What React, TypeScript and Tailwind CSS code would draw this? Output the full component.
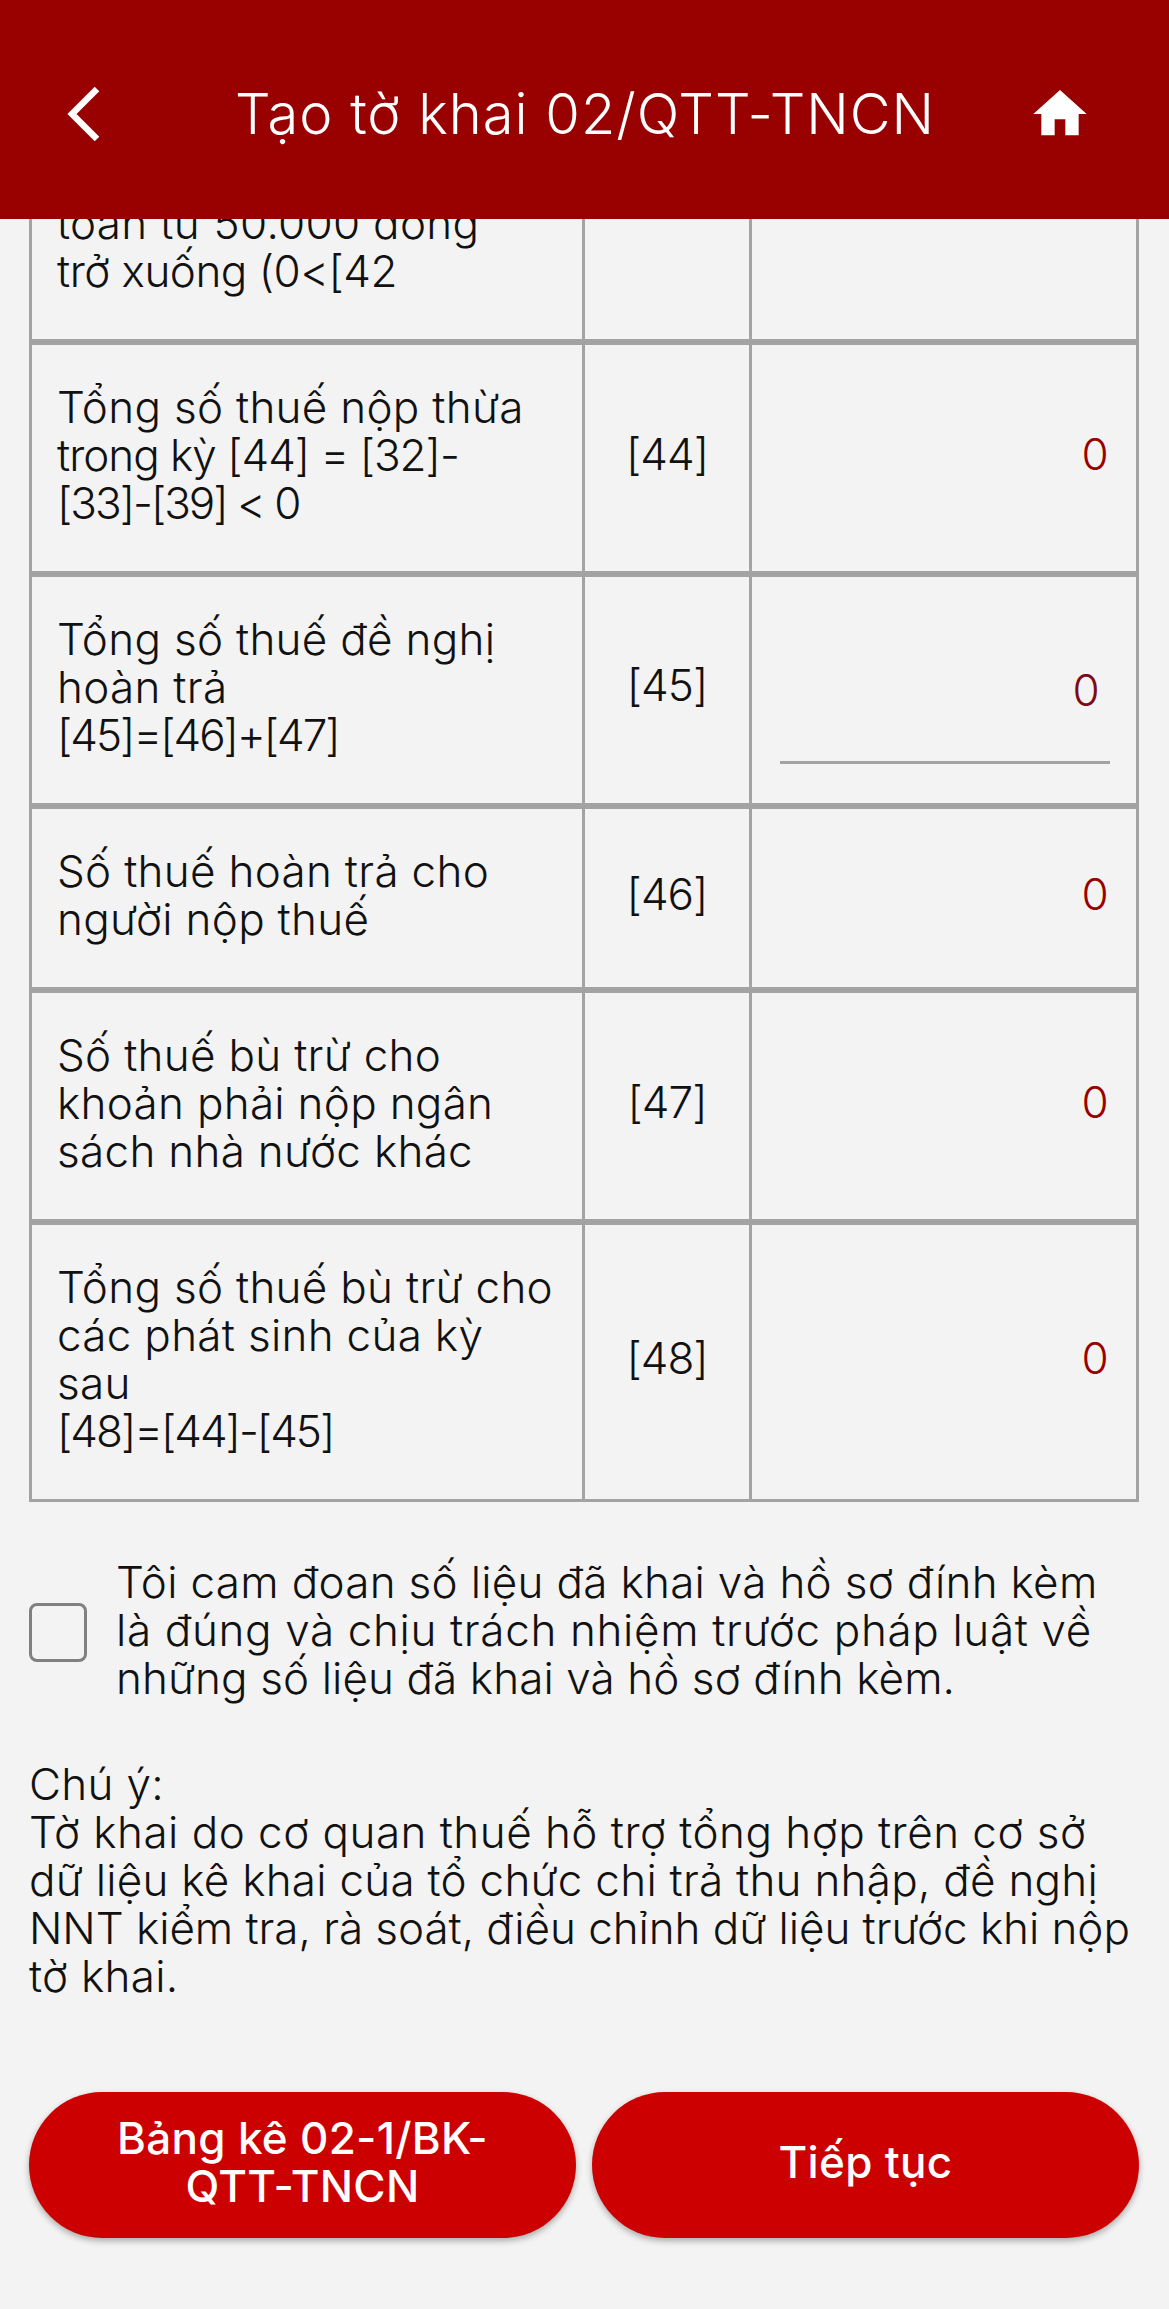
import React from "react";

const rows = [
    { lines: ["Tổng số thuế nộp thừa", "trong kỳ [44] = [32]-", "[33]-[39] < 0"], code: "[44]" },
    { lines: ["Tổng số thuế đề nghị", "hoàn trả", "[45]=[46]+[47]"], code: "[45]", input: true },
    { lines: ["Số thuế hoàn trả cho", "người nộp thuế"], code: "[46]" },
    { lines: ["Số thuế bù trừ cho", "khoản phải nộp ngân", "sách nhà nước khác"], code: "[47]" },
    { lines: ["Tổng số thuế bù trừ cho", "các phát sinh của kỳ", "sau", "[48]=[44]-[45]"], code: "[48]" },
];

// digits and brackets run narrower in the reference font
function lineClass(l: string) {
    if (l.startsWith("[")) return "whitespace-nowrap tracking-[-2px]";
    if (l.includes("[")) return "whitespace-nowrap tracking-[-1px]";
    return "whitespace-nowrap";
}

function Row({ lines, code, input }: { lines: string[]; code: string; input?: boolean }) {
    return (
        <div className="flex border-[3px] border-[#a3a3a3]">
            <div className="w-[550px] pt-[38px] pb-[44px] pl-[25px] text-[#111]">
                {lines.map((l) => (
                    <div key={l} className={lineClass(l)}>{l}</div>
                ))}
            </div>
            <div className="flex w-[167px] items-center justify-center border-l-[3px] border-[#a3a3a3]">
                <span className={input ? "-mt-[11px] tracking-[-1px]" : "-mt-[8px] tracking-[-1px]"}>{code}</span>
            </div>
            <div className="relative flex flex-1 items-center justify-end border-l-[3px] border-[#a3a3a3] pr-[27px]">
                <span className={input ? "-mt-[1px] pr-[9px] text-[#7d0a14]" : "-mt-[8px] text-[#990000]"}>0</span>
                {input && <div className="absolute right-[26px] bottom-[39px] h-[3px] w-[330px] bg-[#a3a3a3]" />}
            </div>
        </div>
    );
}

export default function App() {
    return (
        <div className="flex h-[2309px] w-[1169px] flex-col overflow-hidden bg-[#f3f3f3] text-[44px] leading-[48px] font-light tracking-[0.3px] text-[#111] font-['Inter','Noto_Sans',sans-serif]">
            {/* Header */}
            <div className="z-10 flex h-[219px] shrink-0 items-center justify-between bg-[#990000] pt-[8px] pr-[77px] pl-[66px] text-white">
                <svg width="36" height="56" viewBox="0 0 36 56" fill="none">
                    <polyline points="31,3 6,28 31,53" stroke="white" strokeWidth="6.5" />
                </svg>
                <div className="ml-[40px] text-[56px] leading-[64px] tracking-[1px]">Tạo tờ khai 02/QTT-TNCN</div>
                <svg width="64" height="64" viewBox="0 0 24 24" fill="white">
                    <path d="M10 20v-6h4v6h5v-8h3L12 3 2 12h3v8z" />
                </svg>
            </div>

            {/* Table */}
            <div className="mr-[30px] ml-[29px]">
                <div className="flex h-[123px] border-x-[3px] border-b-[3px] border-[#a3a3a3]">
                    <div className="w-[550px] overflow-hidden pl-[25px]">
                        <div className="-mt-[20px] whitespace-nowrap">toán từ 50.000 đồng</div>
                        <div className="whitespace-nowrap tracking-[-0.5px]">trở xuống (0&lt;[42</div>
                    </div>
                    <div className="w-[167px] border-l-[3px] border-[#a3a3a3]" />
                    <div className="flex-1 border-l-[3px] border-[#a3a3a3]" />
                </div>
                {rows.map((r) => (
                    <Row key={r.code} {...r} />
                ))}
            </div>

            {/* Cam doan */}
            <div className="mt-[56px] mr-[30px] ml-[29px] flex items-center">
                <div className="mt-[4px] h-[59px] w-[58px] shrink-0 rounded-[8px] border-[3px] border-[#808080]" />
                <div className="ml-[29px] whitespace-nowrap">
                    <div>Tôi cam đoan số liệu đã khai và hồ sơ đính kèm</div>
                    <div className="tracking-[0.65px]">là đúng và chịu trách nhiệm trước pháp luật về</div>
                    <div className="tracking-[0.1px]">những số liệu đã khai và hồ sơ đính kèm.</div>
                </div>
            </div>

            {/* Chu y */}
            <div className="mt-[58px] mr-[30px] ml-[29px] whitespace-nowrap">
                <div>Chú ý:</div>
                <div className="tracking-[0.48px]">Tờ khai do cơ quan thuế hỗ trợ tổng hợp trên cơ sở</div>
                <div className="tracking-[0.26px]">dữ liệu kê khai của tổ chức chi trả thu nhập, đề nghị</div>
                <div className="tracking-[-0.05px]">NNT kiểm tra, rà soát, điều chỉnh dữ liệu trước khi nộp</div>
                <div>tờ khai.</div>
            </div>

            {/* Buttons */}
            <div className="mt-[92px] mr-[30px] ml-[29px] flex gap-[16px]">
                <button className="flex h-[146px] flex-1 items-center justify-center rounded-full bg-[#cc0000] pb-[6px] text-center font-medium text-white shadow-[0_3px_6px_rgba(0,0,0,0.3)]">
                    Bảng kê 02-1/BK-
                    <br />
                    QTT-TNCN
                </button>
                <button className="flex h-[146px] flex-1 items-center justify-center rounded-full bg-[#cc0000] pb-[6px] font-medium text-white shadow-[0_3px_6px_rgba(0,0,0,0.3)]">
                    Tiếp tục
                </button>
            </div>
        </div>
    );
}
